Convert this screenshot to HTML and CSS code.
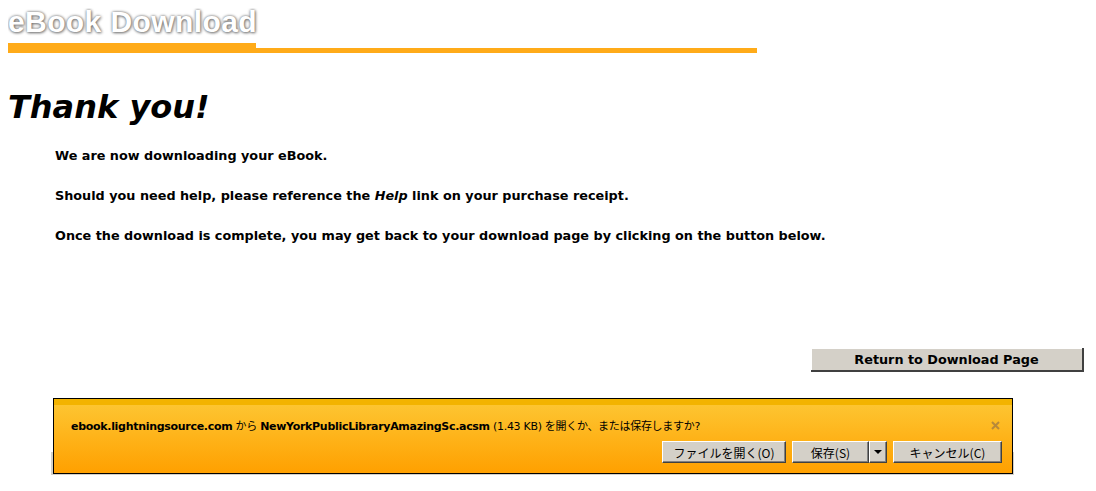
FILE: index.html
```html
<!DOCTYPE html>
<html>
    <head>
        <title>eBook Download</title>
        <link rel="stylesheet" href="styles.css">
    </head>
    <body>
        <div class="banner">
            <h1 class="banner-title">eBook Download</h1>
            <div class="banner-rule">
                <div class="rule-thick"></div>
                <div class="rule-thin"></div>
            </div>
        </div>

        <h2 class="thanks">Thank you!</h2>

        <div class="message">
            <p>We are now downloading your eBook.</p>
            <p>Should you need help, please reference the <i>Help</i> link on your purchase receipt.</p>
            <p>Once the download is complete, you may get back to your download page by clicking on the button below.</p>
        </div>

        <div class="return-row">
            <button class="return-btn">Return to Download Page</button>
        </div>

        <!-- browser download notification over the page -->
        <div class="notify-area">
            <div class="notify-bar">
                <div class="notify-band"></div>
                <div class="notify-text">
                    <span><b>ebook.lightningsource.com</b> から <b>NewYorkPublicLibraryAmazingSc.acsm</b> (1.43 KB) を開くか、または保存しますか?</span>
                    <svg class="notify-close" width="9" height="9" viewBox="0 0 9 9">
                        <path d="M1 1 L8 8 M8 1 L1 8" stroke="#b8893a" stroke-width="2"/>
                    </svg>
                </div>
                <div class="notify-buttons">
                    <button class="win-btn open-btn">ファイルを開く(O)</button>
                    <div class="split">
                        <button class="win-btn save-btn">保存(S)</button>
                        <button class="win-btn arrow-btn"><span class="arrow"></span></button>
                    </div>
                    <button class="win-btn cancel-btn">キャンセル(C)</button>
                </div>
            </div>
        </div>
    </body>
</html>
```

FILE: styles.css
```css
body {
    margin: 8px;
    background-color: white;
    color: black;
    font-family: "DejaVu Sans", Verdana, sans-serif;
}
.banner-title {
    margin: 0 0 8px 0;
    font-family: "Liberation Sans", Arial, sans-serif;
    font-size: 30px;
    font-weight: bold;
    line-height: 27px;
    letter-spacing: 0.4px;
    color: white;
    text-shadow: 0 0 3px #6a6a6a, 1px 1px 3px #8a8a8a;
}
.banner-rule {
    display: flex;
    align-items: flex-end;
}
.rule-thick {
    width: 248px;
    height: 10px;
    background-color: #ffab19;
}
.rule-thin {
    width: 501px;
    height: 5px;
    background-color: #ffab19;
}
.thanks {
    margin: 36px 0 0 0;
    font-size: 32px;
    font-style: italic;
    font-weight: bold;
    line-height: 36px;
}
.message {
    margin-top: 23px;
    padding-left: 47px;
}
.message p {
    margin: 0 0 24px 0;
    font-size: 12.8px;
    font-weight: bold;
    line-height: 16px;
}
.return-row {
    display: flex;
    justify-content: flex-end;
    margin-top: 104px;
    padding-right: 4px;
}
.return-btn {
    width: 273px;
    height: 24px;
    padding: 0;
    font-family: "DejaVu Sans", Verdana, sans-serif;
    font-size: 12.8px;
    font-weight: bold;
    color: black;
    background-color: #d4d0c8;
    border: none;
    border-right: 2px solid #404040;
    border-bottom: 2px solid #404040;
    box-shadow: inset 1px 1px #ffffff;
}
/* Notification bar */
.notify-area {
    position: relative;
    margin: 26px 0 0 43px;
    width: 963px;
    height: 77px;
}
.notify-area::before {
    content: "";
    position: absolute;
    left: 0;
    top: 54px;
    width: 963px;
    height: 23px;
    background-color: #d4d0c8;
}
.notify-bar {
    position: absolute;
    left: 2px;
    top: 0;
    width: 958px;
    height: 74px;
    border: 1px solid black;
    background: linear-gradient(#fdc835, #ffa000);
    font-family: "DejaVu Sans", Tahoma, "Noto Sans CJK JP", sans-serif;
    font-size: 11px;
}
.notify-band {
    height: 6px;
    background-color: #f3b300;
}
.notify-text {
    display: flex;
    justify-content: space-between;
    align-items: center;
    padding: 12px 12px 0 17px;
    height: 16px;
    letter-spacing: -0.3px;
}
.notify-text span {
    font-family: "DejaVu Sans", "Noto Sans CJK JP", sans-serif;
}
.notify-close {
    display: block;
}
.notify-buttons {
    display: flex;
    justify-content: flex-end;
    gap: 6px;
    padding: 8px 10px 0 0;
}
.split {
    display: flex;
}
.win-btn {
    height: 22px;
    padding: 0;
    font-family: "Noto Sans CJK JP", sans-serif;
    font-size: 12px;
    color: black;
    background-color: #d4d0c8;
    border: 1px solid;
    border-color: #ffffff #404040 #404040 #ffffff;
    box-shadow: inset -1px -1px #808080;
}
.open-btn {
    width: 124px;
}
.save-btn {
    width: 77px;
}
.arrow-btn {
    width: 18px;
    display: flex;
    align-items: center;
    justify-content: center;
}
.arrow {
    width: 0;
    height: 0;
    border-left: 4px solid transparent;
    border-right: 4px solid transparent;
    border-top: 4px solid black;
}
.cancel-btn {
    width: 109px;
}
```
